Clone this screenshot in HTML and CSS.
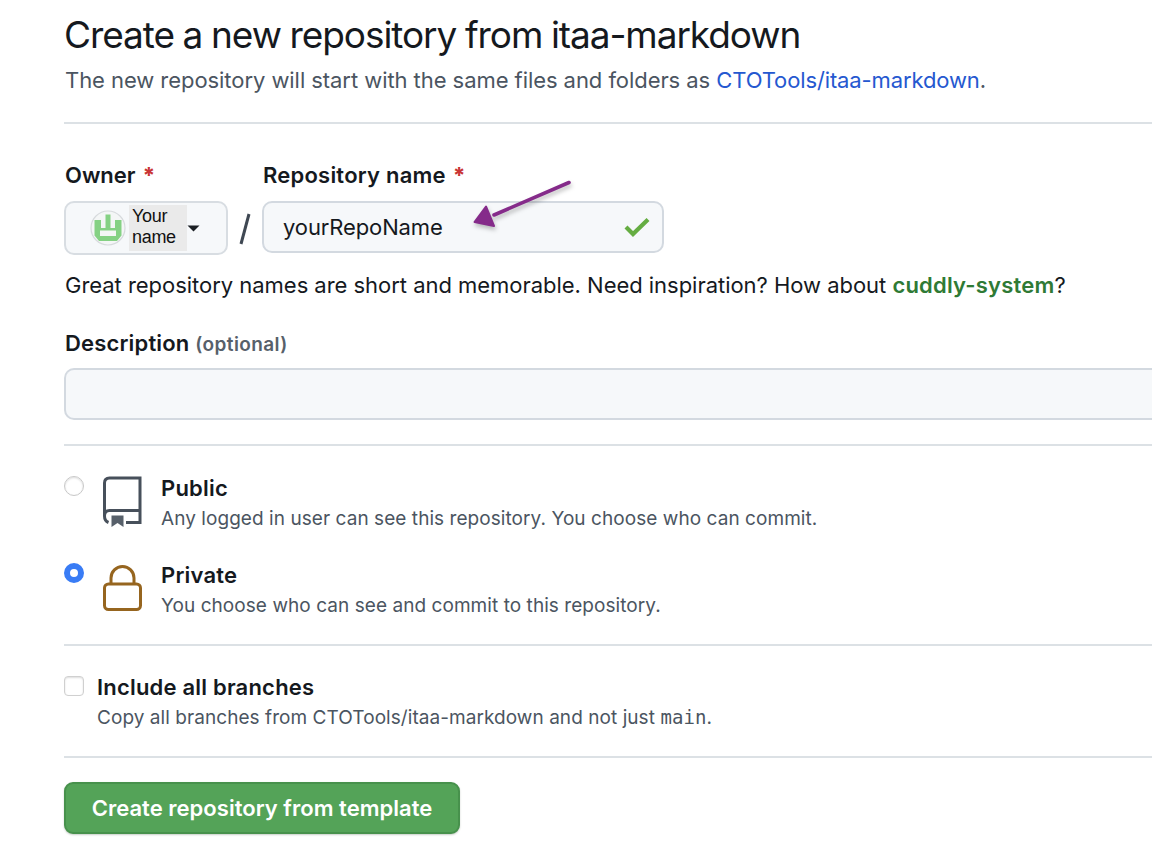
FILE: index.html
```html
<!DOCTYPE html>
<html lang="en">
<head>
<meta charset="utf-8">
<title>Create a new repository</title>
<link rel="stylesheet" href="styles.css">
</head>
<body>
<main class="page">
  <header class="header">
    <h1 class="title">Create a new repository from itaa-markdown</h1>
    <p class="subtitle">The new repository will start with the same files and folders as <a class="link" href="#">CTOTools/itaa-markdown</a>.</p>
  </header>
  <section class="naming">
    <div class="name-row">
      <div class="owner">
        <div class="label owner-label"><span>Owner</span><span class="star">*</span></div>
        <button class="owner-button" type="button">
          <svg class="avatar" width="36" height="36" viewBox="0 0 36 36"><circle cx="18" cy="18" r="17" fill="#f4f6f6" stroke="#d7dadd" stroke-width="1.2"/><path fill="#85d184" fill-rule="evenodd" d="M4.500 10H11v8h4.500V4.500h5V18H25v-8h6.500v15.500L27 31H9l-4.500-5.500zM10 20.500v5.500h16v-5.500z"/></svg>
          <span class="owner-name">Your<br>name</span>
          <svg class="caret" width="13" height="7" viewBox="0 0 13 7"><path d="M.5.500h12L6.500 6.500z" fill="#1b1f24"/></svg>
        </button>
      </div>
      <svg class="slash" width="12" height="32" viewBox="0 0 12 32"><path d="M10 1 2 31" stroke="#3f4853" stroke-width="3"/></svg>
      <div class="repo">
        <div class="label repo-label"><span>Repository name</span><span class="star">*</span></div>
        <div class="repo-input"><span>yourRepoName</span>
          <svg class="check" width="26" height="20" viewBox="0 0 26 20"><path d="M2 10 9 17 24 2.500" fill="none" stroke="#65ad42" stroke-width="4.200"/></svg>
        </div>
        <svg class="arrow" width="104" height="56" viewBox="0 0 104 56"><path d="M99 5.500 24 38" fill="none" stroke="#852b8a" stroke-width="3.600" stroke-linecap="round"/><path d="M4.500 45 16 29.500 24 49z" fill="#852b8a" stroke="#852b8a" stroke-width="2" stroke-linejoin="round"/></svg>
      </div>
    </div>
    <p class="hint">Great repository names are short and memorable. Need inspiration? How about <b class="suggestion">cuddly-system</b>?</p>
    <div class="description-label">Description <span class="optional">(optional)</span></div>
    <div class="description-input"></div>
  </section>
  <section class="visibility">
    <div class="option">
      <span class="radio"></span>
      <svg class="icon" width="40" height="52" viewBox="0 0 40 52"><g fill="none" stroke="#47505b" stroke-width="3"><path d="M6.500 47.500Q2.500 46 2.500 41V8Q2.500 3 7.500 3H38V47.500H24"/><path d="M2.500 41Q2.500 35.500 7.500 35.500H38"/></g><path d="M9.500 40.500h12V52l-6-4-6 4z" fill="#57606a"/></svg>
      <div class="copy"><div class="name">Public</div><div class="detail">Any logged in user can see this repository. You choose who can commit.</div></div>
    </div>
    <div class="option">
      <span class="radio checked"></span>
      <svg class="icon" width="40" height="52" viewBox="0 0 40 52"><g fill="none" stroke="#96651f" stroke-width="3"><rect x="2.500" y="22" width="36" height="25.500" rx="4"/><path d="M9 22V16a11.500 11.500 0 0 1 23 0v6"/></g></svg>
      <div class="copy"><div class="name">Private</div><div class="detail">You choose who can see and commit to this repository.</div></div>
    </div>
  </section>
  <section class="branches">
    <span class="checkbox"></span>
    <div class="copy"><div class="name">Include all branches</div><div class="detail">Copy all branches from CTOTools/itaa-markdown and not just <code>main</code>.</div></div>
  </section>
  <button class="submit" type="button">Create repository from template</button>
</main>
</body>
</html>
```

FILE: styles.css
```css
* { box-sizing: border-box; }
body { margin: 0; background: #fff; color: #15191e; font-family: Inter, "Liberation Sans", sans-serif; overflow: hidden; }
h1, p { margin: 0; font-weight: 400; }
button { font-family: inherit; margin: 0; padding: 0; }
.page { padding-left: 64px; height: 866px; white-space: nowrap; }
.header { height: 124px; padding-top: 12px; border-bottom: 2px solid #dce1e5; }
.title { font-size: 37px; line-height: 46px; letter-spacing: -1.080px; word-spacing: -.6px; }
.subtitle { margin-top: 6px; padding-left: 1px; font-size: 22px; line-height: 32px; letter-spacing: -.06px; color: #4b5561; }
.link { color: #2558d0; text-decoration: none; letter-spacing: -.12px; }
.naming { height: 322px; padding-top: 36px; border-bottom: 2px solid #dce1e5; }
.name-row { display: flex; }
.label { display: flex; gap: 7px; height: 32px; margin-bottom: 9px; padding-left: 1px; font-size: 22px; font-weight: 600; line-height: 31px; }
.repo-label { letter-spacing: .22px; }
.star { color: #c93535; font-weight: 800; }
.owner-button { display: flex; align-items: center; width: 164px; height: 54px; padding-left: 24px; background: #f6f8fa; border: 2px solid #d8dde2; border-radius: 10px; }
.owner-name { width: 58px; height: 46px; margin-left: 3px; padding: 1px 0 0 3px; background: #eaeaea; font: 18px/21px "Liberation Sans", sans-serif; text-align: left; letter-spacing: -.3px; color: #111; }
.caret { margin-left: 0; }
.slash { margin: 53px 11px 0; }
.repo { position: relative; }
.repo-input { display: flex; align-items: center; justify-content: space-between; width: 402px; height: 52px; padding: 0 12px 0 19px; background: #f6f8fa; border: 2px solid #d3d9e0; border-radius: 10px; font-size: 22px; letter-spacing: -.12px; }
.arrow { position: absolute; left: 208px; top: 17px; filter: drop-shadow(1px 3px 2px rgba(0,0,0,.25)); }
.hint { margin-top: 14px; padding-left: 1px; font-size: 22px; line-height: 32px; letter-spacing: -.03px; }
.suggestion { color: #2f7a35; font-weight: 600; letter-spacing: .2px; }
.description-label { margin-top: 26px; padding-left: 1px; height: 32px; font-size: 22px; line-height: 32px; font-weight: 600; letter-spacing: .17px; }
.optional { font-size: 19px; letter-spacing: .4px; color: #57606a; }
.description-input { margin-top: 9px; height: 52px; background: #f6f8fa; border: 2px solid #d3d9e0; border-right: 0; border-radius: 10px 0 0 10px; }
.visibility { height: 200px; padding-top: 26px; border-bottom: 2px solid #dce1e5; }
.option { display: flex; height: 87px; }
.radio { width: 20px; height: 20px; margin-top: 4px; border: 1px solid #c8c8c8; border-radius: 50%; box-shadow: inset 0 1px 2px #ddd; }
.radio.checked { border: 6px solid #397cf5; box-shadow: none; }
.icon { margin: 3px 19px 0 18px; }
.name { font-size: 22px; line-height: 32px; font-weight: 600; letter-spacing: .2px; }
.detail { margin-top: 1px; font-size: 19px; line-height: 28px; letter-spacing: .06px; color: #4b5561; }
.branches { display: flex; gap: 13px; height: 112px; padding-top: 25px; border-bottom: 2px solid #dce1e5; }
.branches .detail { margin-top: 0; }
.checkbox { width: 20px; height: 20px; margin-top: 5px; border: 1px solid #d0d0d0; border-radius: 4px; box-shadow: inset 0 1px 2px #ddd; }
code { font-family: "DejaVu Sans Mono", monospace; font-size: 19px; }
.submit { display: block; width: 396px; height: 52px; margin-top: 24px; padding-bottom: 1px; background: #54a358; border: 2px solid #47914c; border-radius: 9px; box-shadow: 0 1px 2px #c8cec8; color: #fff; font-size: 22px; font-weight: 600; letter-spacing: .03px; }
```
